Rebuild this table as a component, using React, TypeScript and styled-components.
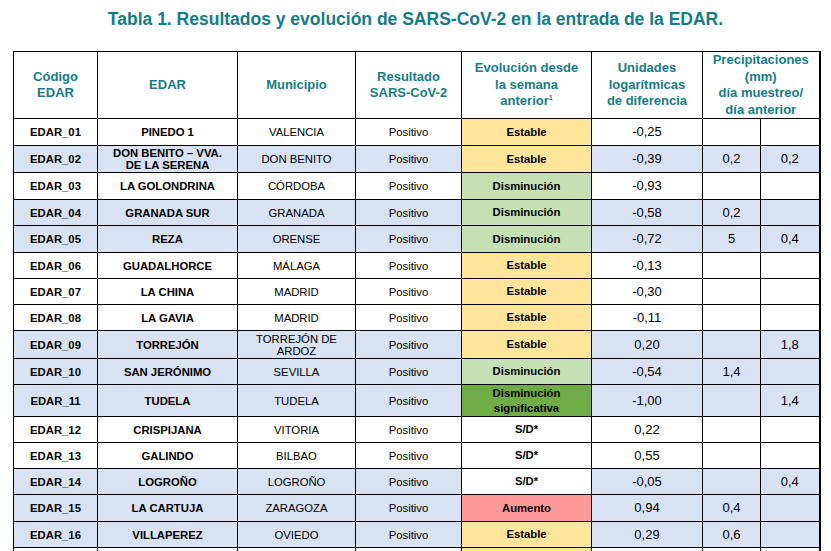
import React from "react";
import styled, { createGlobalStyle } from "styled-components";

const Global = createGlobalStyle`
  html, body { margin: 0; padding: 0; background: #ffffff; overflow: hidden; }
  body { font-family: "Liberation Sans", Arial, sans-serif; color: #000; }
`;

const Page = styled.div`
  width: 831px;
  padding-top: 9px;
`;

const Title = styled.h1`
  margin: 0 0 22px 0;
  text-align: center;
  font-size: 17.5px;
  line-height: 20px;
  font-weight: 700;
  color: #137d87;
`;

const Table = styled.table`
  margin-left: 13px;
  width: 806px;
  border-collapse: collapse;
  table-layout: fixed;
  border-right: 2px solid #000;
`;

const HeadCell = styled.th`
  border: 1px solid #000;
  height: 66px;
  padding: 0 2px;
  font-size: 13px;
  line-height: 16.5px;
  font-weight: 700;
  color: #137d87;
  text-align: center;
  vertical-align: middle;
  background: #fff;
  sup { font-size: 7px; vertical-align: 5px; line-height: 0; }
`;

const Row = styled.tr<{ $blue: boolean; $h: number }>`
  height: ${(p) => p.$h}px;
  background: ${(p) => (p.$blue ? "#d9e2f3" : "#ffffff")};
`;

const Cell = styled.td<{ $bold?: boolean; $num?: boolean }>`
  border: 1px solid #000;
  padding: 0 3px;
  text-align: center;
  vertical-align: middle;
  white-space: pre-line;
  font-size: ${(p) => (p.$num ? "13px" : "11.3px")};
  line-height: 12px;
  font-weight: ${(p) => (p.$bold ? 700 : 400)};
  color: #000;
`;

type Evo = "Estable" | "Disminución" | "Disminución\nsignificativa" | "S/D*" | "Aumento";

const evoColor: Record<Evo, string> = {
  Estable: "#ffe599",
  "Disminución": "#c5e0b3",
  "Disminución\nsignificativa": "#70ad47",
  "S/D*": "#ffffff",
  Aumento: "#ff9999",
};

const EvoCell = styled.td<{ $bg: string }>`
  border: 1px solid #000;
  padding: 0 3px;
  background: ${(p) => p.$bg};
  text-align: center;
  vertical-align: middle;
  white-space: pre-line;
  font-size: 11.3px;
  line-height: 14.5px;
  font-weight: 700;
  color: #000;
`;

interface RowData {
  code: string;
  name: string;
  muni: string;
  evo: Evo;
  log: string;
  p1: string;
  p2: string;
  blue: boolean;
  h: number;
}

const rows: RowData[] = [
  { code: "EDAR_01", name: "PINEDO 1", muni: "VALENCIA", evo: "Estable", log: "-0,25", p1: "", p2: "", blue: false, h: 27 },
  { code: "EDAR_02", name: "DON BENITO – VVA.\nDE LA SERENA", muni: "DON BENITO", evo: "Estable", log: "-0,39", p1: "0,2", p2: "0,2", blue: true, h: 27 },
  { code: "EDAR_03", name: "LA GOLONDRINA", muni: "CÓRDOBA", evo: "Disminución", log: "-0,93", p1: "", p2: "", blue: false, h: 27 },
  { code: "EDAR_04", name: "GRANADA SUR", muni: "GRANADA", evo: "Disminución", log: "-0,58", p1: "0,2", p2: "", blue: true, h: 26 },
  { code: "EDAR_05", name: "REZA", muni: "ORENSE", evo: "Disminución", log: "-0,72", p1: "5", p2: "0,4", blue: true, h: 27 },
  { code: "EDAR_06", name: "GUADALHORCE", muni: "MÁLAGA", evo: "Estable", log: "-0,13", p1: "", p2: "", blue: false, h: 26 },
  { code: "EDAR_07", name: "LA CHINA", muni: "MADRID", evo: "Estable", log: "-0,30", p1: "", p2: "", blue: false, h: 26 },
  { code: "EDAR_08", name: "LA GAVIA", muni: "MADRID", evo: "Estable", log: "-0,11", p1: "", p2: "", blue: false, h: 26 },
  { code: "EDAR_09", name: "TORREJÓN", muni: "TORREJÓN DE\nARDOZ", evo: "Estable", log: "0,20", p1: "", p2: "1,8", blue: true, h: 28 },
  { code: "EDAR_10", name: "SAN JERÓNIMO", muni: "SEVILLA", evo: "Disminución", log: "-0,54", p1: "1,4", p2: "", blue: true, h: 26 },
  { code: "EDAR_11", name: "TUDELA", muni: "TUDELA", evo: "Disminución\nsignificativa", log: "-1,00", p1: "", p2: "1,4", blue: true, h: 32 },
  { code: "EDAR_12", name: "CRISPIJANA", muni: "VITORIA", evo: "S/D*", log: "0,22", p1: "", p2: "", blue: false, h: 26 },
  { code: "EDAR_13", name: "GALINDO", muni: "BILBAO", evo: "S/D*", log: "0,55", p1: "", p2: "", blue: false, h: 26 },
  { code: "EDAR_14", name: "LOGROÑO", muni: "LOGROÑO", evo: "S/D*", log: "-0,05", p1: "", p2: "0,4", blue: true, h: 26 },
  { code: "EDAR_15", name: "LA CARTUJA", muni: "ZARAGOZA", evo: "Aumento", log: "0,94", p1: "0,4", p2: "", blue: true, h: 27 },
  { code: "EDAR_16", name: "VILLAPEREZ", muni: "OVIEDO", evo: "Estable", log: "0,29", p1: "0,6", p2: "", blue: true, h: 26 },
  { code: "EDAR_17", name: "PALMA 1", muni: "PALMA DE\nMALLORCA", evo: "Estable", log: "0,12", p1: "", p2: "", blue: false, h: 28 },
];

const widths = [84, 140, 118, 106, 130, 111, 58, 59];

export default function App() {
  return (
    <Page>
      <Global />
      <Title>Tabla 1. Resultados y evolución de SARS-CoV-2 en la entrada de la EDAR.</Title>
      <Table>
        <colgroup>
          {widths.map((w, i) => (
            <col key={i} style={{ width: w }} />
          ))}
        </colgroup>
        <thead>
          <tr>
            <HeadCell>Código<br />EDAR</HeadCell>
            <HeadCell>EDAR</HeadCell>
            <HeadCell>Municipio</HeadCell>
            <HeadCell>Resultado<br />SARS-CoV-2</HeadCell>
            <HeadCell>Evolución desde<br />la semana<br />anterior<sup>1</sup></HeadCell>
            <HeadCell>Unidades<br />logarítmicas<br />de diferencia</HeadCell>
            <HeadCell colSpan={2}>Precipitaciones<br />(mm)<br />día muestreo/<br />día anterior</HeadCell>
          </tr>
        </thead>
        <tbody>
          {rows.map((r) => (
            <Row key={r.code} $blue={r.blue} $h={r.h}>
              <Cell $bold>{r.code}</Cell>
              <Cell $bold>{r.name}</Cell>
              <Cell>{r.muni}</Cell>
              <Cell>Positivo</Cell>
              <EvoCell $bg={evoColor[r.evo]}>{r.evo}</EvoCell>
              <Cell $num>{r.log}</Cell>
              <Cell $num>{r.p1}</Cell>
              <Cell $num>{r.p2}</Cell>
            </Row>
          ))}
        </tbody>
      </Table>
    </Page>
  );
}
